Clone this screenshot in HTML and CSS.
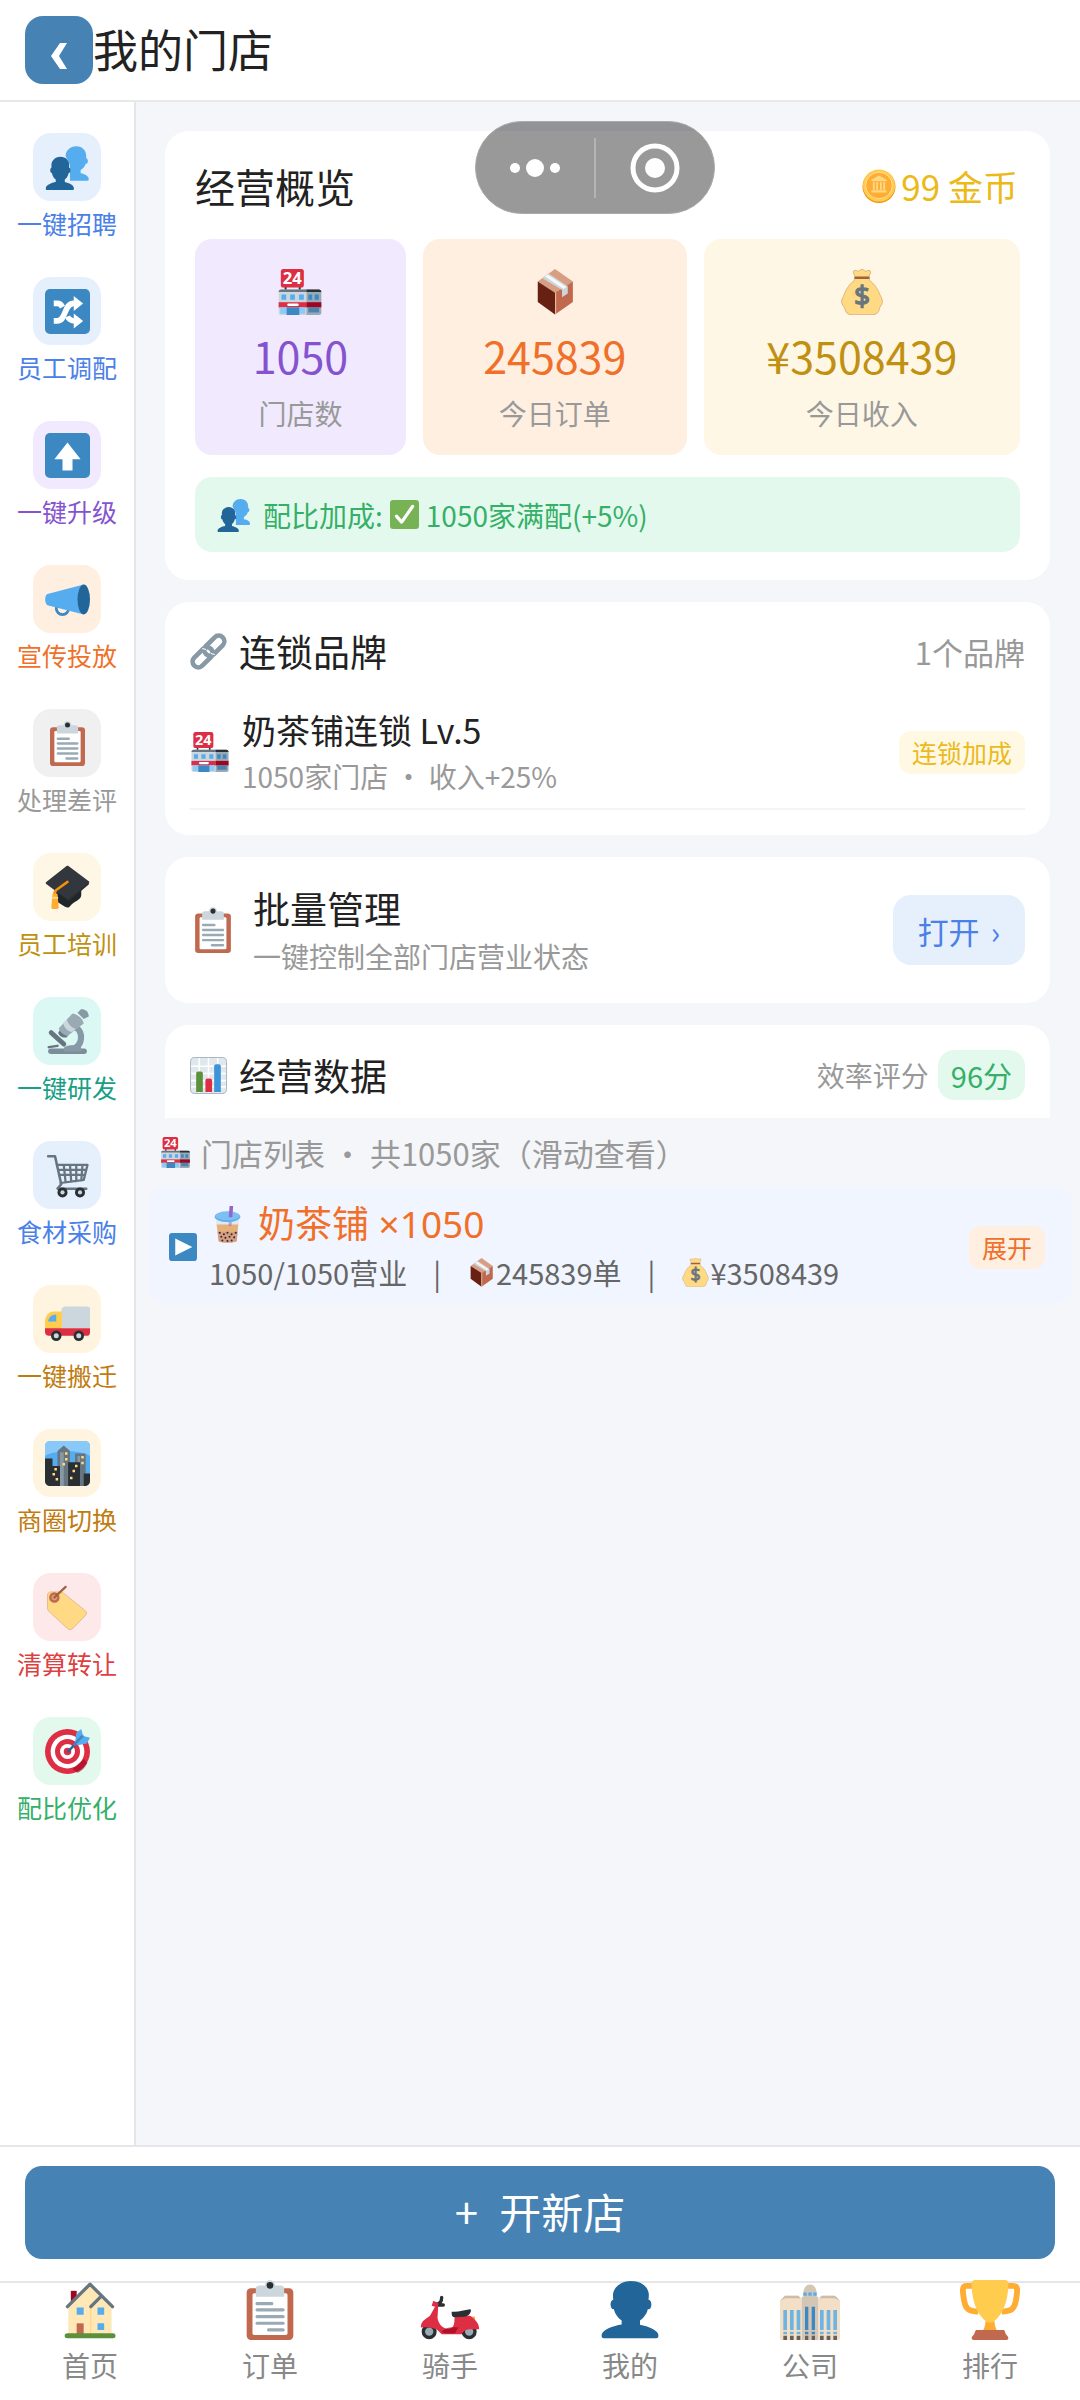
FILE: index.html
```html
<!DOCTYPE html>
<html lang="zh-CN">
<head>
    <meta charset="UTF-8">
    <meta name="viewport" content="width=device-width, initial-scale=1.0">
    <title>我的门店</title>
    <link rel="stylesheet" href="styles.css">
</head>
<body>
    <!-- icon sprite -->
    <svg class="sprite" aria-hidden="true">
        <symbol id="i-user" viewBox="0 0 36 36">
            <path fill="#269" d="M24 26.799v-2.566c2-1.348 4.08-3.779 4.703-6.896.186.103.206.17.413.17.991 0 1.709-1.287 1.709-2.873 0-1.562-.823-2.827-1.794-2.865.187-.674.293-1.577.293-2.735C29.324 5.168 26 .527 18.541.527c-6.629 0-10.777 4.641-10.777 8.507 0 1.123.069 2.043.188 2.755-.911.137-1.629 1.352-1.629 2.845 0 1.587.804 2.873 1.796 2.873.206 0 .025-.067.209-.17C8.952 20.453 11 22.885 13 24.232v2.414c-5 .645-12 3.437-12 6.23v1.061C1 35 2.076 35 3.137 35h29.725C33.924 35 35 35 35 33.938v-1.061c0-2.615-6-5.225-11-6.078z"/>
        </symbol>
        <symbol id="i-users" viewBox="0 0 36 36">
            <path fill="#55ACEE" d="M25 1c-5 0-8.500 3.500-8.500 8L20 16v12.500h14c.7 0 1-.4 1-1.500 0-2-3-4-6.500-4.500V20c2-1 3.600-3 4-5 1.200 0 1.800-1 1.800-2.300 0-1.200-.5-2-1.300-2.200C33.500 4.500 30 1 25 1z"/>
            <g transform="translate(0 9) scale(.66 .77)">
                <path fill="#269" d="M24 26.799v-2.566c2-1.348 4.080-3.779 4.703-6.896.186.103.206.17.413.17.991 0 1.709-1.287 1.709-2.873 0-1.562-.823-2.827-1.794-2.865.187-.674.293-1.577.293-2.735C29.324 5.168 26 .527 18.541.527c-6.629 0-10.777 4.641-10.777 8.507 0 1.123.069 2.043.188 2.755-.911.137-1.629 1.352-1.629 2.845 0 1.587.804 2.873 1.796 2.873.206 0 .025-.067.209-.17C8.952 20.453 11 22.885 13 24.232v2.414c-5 .645-12 3.437-12 6.230v1.061C1 35 2.076 35 3.137 35h29.725C33.924 35 35 35 35 33.938v-1.061c0-2.615-6-5.225-11-6.078z"/>
            </g>
        </symbol>
        <symbol id="i-shuffle" viewBox="0 0 36 36">
            <rect width="36" height="36" rx="4" fill="#3B88C3"/>
            <path fill="none" stroke="#fff" stroke-width="4.500" d="M7 25.500h3c7 0 5-14 13-14h1"/>
            <path fill="none" stroke="#fff" stroke-width="4.500" d="M7 11.500h3c2 0 3 1 4 3M18 22c1 2.300 3 3.500 6 3.500"/>
            <path fill="#fff" d="M23 5.500l7.500 6-7.500 6zM23 19.500l7.500 6-7.500 6z"/>
        </symbol>
        <symbol id="i-up" viewBox="0 0 36 36">
            <rect width="36" height="36" rx="4" fill="#3B88C3"/>
            <path fill="#fff" d="M18 7.500L28.500 21H22v9h-8v-9H7.500z"/>
        </symbol>
        <symbol id="i-play" viewBox="0 0 36 36">
            <rect width="36" height="36" rx="4" fill="#3B88C3"/>
            <path fill="#fff" d="M8 7l22 11L8 29z"/>
        </symbol>
        <symbol id="i-check" viewBox="0 0 36 36">
            <rect width="36" height="36" rx="4" fill="#77B255"/>
            <path fill="none" stroke="#fff" stroke-width="4" stroke-linecap="round" stroke-linejoin="round" d="M8 20l6.500 7.500L28 8"/>
        </symbol>
        <symbol id="i-horn" viewBox="0 0 36 36">
            <circle cx="14" cy="25" r="5" fill="none" stroke="#3B88C3" stroke-width="2.200"/>
            <path fill="#55ACEE" d="M2 13.500L31 6v24L2 22.500c-2.500-1-2.500-8 0-9z"/>
            <ellipse cx="31" cy="18" rx="5" ry="12" fill="#269"/>
        </symbol>
        <symbol id="i-clip" viewBox="0 0 36 36">
            <rect x="4" y="5" width="28" height="31" rx="2.500" fill="#C1694F"/>
            <rect x="7.500" y="8" width="21" height="25" rx="1" fill="#fff"/>
            <circle cx="18" cy="3.200" r="3" fill="#CCD6DD"/>
            <path fill="#CCD6DD" d="M9.500 10V5c0-1 1-1.700 2-1.700h13c1 0 2 .7 2 1.700v5z"/>
            <circle cx="18" cy="3.200" r="2" fill="#292F33"/>
            <g fill="#99AAB5">
                <rect x="9.300" y="13.200" width="10.700" height="1.900" rx=".9"/>
                <rect x="9.300" y="17" width="17.500" height="1.900" rx=".9"/>
                <rect x="9.300" y="21" width="17.500" height="1.900" rx=".9"/>
                <rect x="9.300" y="25" width="17.500" height="1.900" rx=".9"/>
                <rect x="16.200" y="29" width="10.600" height="1.900" rx=".9"/>
            </g>
        </symbol>
        <symbol id="i-cap" viewBox="0 0 36 36">
            <path fill="#212629" d="M9 17l20 1v6c0 4-6 5-9 9-.8 1.300-2.500 1.300-4 .4L9 29z"/>
            <path fill="#31373D" d="M17 1c.7-.5 1.300-.5 2 0l16 12c.6.6.6 1.100 0 1.600L20 27.500c-.7.600-1.500.600-2.300 0L1 15.200c-.6-.6-.6-1.100 0-1.600z"/>
            <path fill="#292F33" d="M18 28l17-14v1.500L19 29z"/>
            <path fill="none" stroke="#F4900C" stroke-width="2" stroke-linecap="round" d="M18 13.500L9 20c-1.500 1-1.500 2-1.500 4"/>
            <path fill="#FFAC33" d="M6 23h4l1 11.500c-2 1-4.500 1-6 0z"/>
            <path fill="#FFD983" d="M5.500 25.500h5v1.500h-5z"/>
        </symbol>
        <symbol id="i-scope" viewBox="0 0 36 36">
            <path fill="none" stroke="#8899A6" stroke-width="5" d="M25 15c6 4 5 15-3 17"/>
            <rect x="2.500" y="31.500" width="31" height="4.500" rx="2.200" fill="#7d8c99"/>
            <path fill="#8899A6" d="M15 32c0-2 3-3 7-3s7 1 7 3v2H15z"/>
            <path stroke="#66757F" stroke-width="4" stroke-linecap="round" d="M5 19l10 9"/>
            <path stroke="#66757F" stroke-width="2" stroke-linecap="round" d="M3 30.500l7-1"/>
            <path fill="#8899A6" d="M26 3l3-3c4 0 6 3 6 6l-4 2z"/>
            <path fill="#66757F" d="M13 15l-2.500 4c1 3 4 4.500 7 3.500l2-3z"/>
            <path fill="#99AAB5" d="M22 3.500c4 .5 8 4 9 8L18 21.500c-3-.5-6-3-7-6z"/>
            <path fill="#CCD6DD" d="M14.500 11l3-2.500c1 3.500 3.500 6 7 7.500l-3 2.500c-4-1-6.500-4-7-7.500z"/>
        </symbol>
        <symbol id="i-cart" viewBox="0 0 36 36">
            <g fill="none" stroke="#66757F" stroke-width="2" stroke-linecap="round" stroke-linejoin="round">
                <path d="M2.500 2.500H8L13 25l-3 3.500h23"/>
                <path stroke-width="1.800" d="M9.500 9.500h24.500L31 21.500 12.500 24M10.500 13.500H33M11.500 17.500h20.500M15 9.500l1.500 14M20 9.500l1 13.500M25 9.500v13M30 9.500L29 22"/>
            </g>
            <circle cx="14" cy="31.500" r="4" fill="#292F33"/><circle cx="14" cy="31.500" r="1.700" fill="#CCD6DD"/>
            <circle cx="28" cy="31.500" r="4" fill="#292F33"/><circle cx="28" cy="31.500" r="1.700" fill="#CCD6DD"/>
        </symbol>
        <symbol id="i-truck" viewBox="0 0 36 36">
            <path fill="#CCD6DD" d="M13 11c0-2 1.500-3.500 3.500-3.500H34c1.200 0 2 .8 2 2V25H13z"/>
            <path fill="#FFCC4D" d="M13.500 11.500v14H0V20c0-5 3-8.500 7-8.500z"/>
            <path fill="#55ACEE" d="M9 14v5.500H2.500C3 16.500 5 14 9 14z"/>
            <path fill="#DD2E44" d="M0 25h36v3.500c0 1.500-1 2.500-2.500 2.500H3c-1.700 0-3-1-3-3z"/>
            <circle cx="9" cy="31" r="4.200" fill="#292F33"/><circle cx="9" cy="31" r="2" fill="#CCD6DD"/>
            <circle cx="27" cy="31" r="4.200" fill="#292F33"/><circle cx="27" cy="31" r="2" fill="#CCD6DD"/>
        </symbol>
        <symbol id="i-city" viewBox="0 0 36 36">
            <rect width="36" height="36" rx="4" fill="#55ACEE"/>
            <path fill="#88C9F9" d="M0 12V4c0-2 2-4 4-4h28c2 0 4 2 4 4v8c-8-5-28-5-36 0z"/>
            <path fill="#66757F" d="M10 36V8l5-4.500L20 8v28zM24 10h8.500v26H24z"/>
            <path fill="#8899A6" d="M12 36V9h3v27zM26 12h2v24h-2z"/>
            <path fill="#292F33" d="M0 14h6v6h6v16H4c-2.200 0-4-1.800-4-4zM18.500 17H28v19h-9.500zM31 26h5v6c0 2.200-1.800 4-4 4h-1z"/>
            <path fill="#FFD983" d="M16 9h2v2h-2zM16 13.500h2v2h-2zM14 17.500h2v2h-2zM29 12h2v2h-2zM29 16.500h2v2h-2zM7.500 21.500h2v2h-2zM6 25.500h2v2H6zM8.500 29.500h2v2h-2zM24 19h2v2h-2zM22 23h2v2h-2zM20 28.500h2v2h-2z"/>
        </symbol>
        <symbol id="i-tag" viewBox="0 0 36 36">
            <path fill="#FFD983" stroke="#D3A976" stroke-width=".5" d="M2 8c0-1.500 1-2.500 2.500-2.500H12c1 0 2 .3 2.800 1l17.400 14c1.300 1 1.300 2.500.3 3.700L22 35c-1.200 1-2.700 1-3.800 0L3 21c-.7-.7-1-1.500-1-2.500z"/>
            <circle cx="7.500" cy="10" r="3.200" fill="#D99E82" stroke="#C1694F" stroke-width="2"/>
            <path stroke="#A0613E" stroke-width="1.800" stroke-linecap="round" d="M7.500 10L16.500 1.500"/>
        </symbol>
        <symbol id="i-target" viewBox="0 0 36 36">
            <circle cx="18" cy="18" r="18" fill="#DD2E44"/>
            <circle cx="18" cy="18" r="13.500" fill="#fff"/>
            <circle cx="18" cy="18" r="10" fill="#DD2E44"/>
            <circle cx="18" cy="18" r="6" fill="#fff"/>
            <circle cx="18" cy="18" r="3" fill="#DD2E44"/>
            <path fill="#A0041E" opacity=".6" d="M22 32l9-8 3 3c-2 4-5 7-8 8z"/>
            <path stroke="#269" stroke-width="2" stroke-linecap="round" d="M18.500 18L28 8"/>
            <path fill="#55ACEE" d="M24 11l1-8 4-3 1.500 5.500L36 7l-2.500 4.500L26 13z"/>
            <path stroke="#3B88C3" stroke-width="2" d="M23 13l7-7.500"/>
        </symbol>
        <symbol id="i-store" viewBox="0 0 36 36">
            <path fill="#292F33" d="M6 13h1.500v4H6zM17 13h1.500v4H17z"/>
            <path fill="#CCD6DD" d="M1.300 18c0-1 .7-2 2-2H23v20H3c-1 0-1.700-.7-1.700-1.700z"/>
            <path fill="#99AAB5" d="M23 16h9.700c1.300 0 2 1 2 2v16.300c0 1-.7 1.700-1.700 1.700H23z"/>
            <path fill="#66757F" d="M1.300 18c0-1 .7-2 2-2H23v2z"/>
            <path fill="#292F33" d="M23 16h9.700c1.300 0 2 1 2 2H23z"/>
            <path fill="#55ACEE" d="M3.500 20h3.700v4H3.500zM10.300 20H14v4h-3.700zM17.300 20H21v4h-3.700z"/>
            <path fill="#3B88C3" d="M24.500 20h3v4h-3zM29.500 20h3.200v4h-3.200z"/>
            <path fill="#DD2E44" d="M1.300 26H23v4H1.300z"/>
            <path fill="#A0041E" d="M23 26h11.700v4H23z"/>
            <rect x="8" y="27" width="9" height="2" rx="1" fill="#fff"/>
            <path fill="#8CCAF7" d="M2.500 30h5v5h-5zM17.500 30H22v5h-4.500z"/>
            <path fill="#3B88C3" d="M7.500 30h10v6h-10z"/>
            <path fill="#4a84ae" d="M24.500 30h8.500v4h-8.500z"/>
            <rect x="3" width="18" height="14.500" rx="2" fill="#DD2E44"/>
            <text x="12" y="12" class="sign-text">24</text>
        </symbol>
        <symbol id="i-box" viewBox="0 0 36 36">
            <path fill="#D99E82" d="M18 0l14 9.800-14 9L4.500 9.800z"/>
            <path fill="#662113" d="M4.500 9.800L18 18.600v17L4.500 25.800z"/>
            <path fill="#C1694F" d="M32 9.800l-14 8.800v17l14-9.800z"/>
            <path fill="#E8B79F" d="M18 18.600l.9-.5v16.900l-.9.600z"/>
            <path fill="#CCD6DD" d="M8.200 7.300l5-3.500L28 13.500v5.700l-4.500 2.900V16.500z"/>
            <path fill="#F5F8FA" d="M10.300 5.800l2-1.400L27 14l-2.300 1.600z"/>
        </symbol>
        <symbol id="i-bag" viewBox="0 0 36 36">
            <path fill="#FFD983" stroke="#B58D55" stroke-width=".4" d="M11.500 1.500c1.300-1.200 2.700.2 3.500.2S16.500.3 18 .3s2.200 1.400 3 1.400 2.200-1.400 3.500-.2c1 1-.5 2.500-1 4.500l.5 3c3 2 6.500 6.500 8 11 .5 1.500 2 3 2 5.500 0 3-2.500 4-2.500 6 0 2.500-3 4.300-5 4.300h-17c-2.500 0-4.500-2-4.800-4.300C4.500 29.500 2 28.500 2 25.500c0-2.500 1.500-3.500 2-5.500 1.500-4.500 5-9 8-11l.5-3c-.5-2-2-3.500-1-4.500z"/>
            <rect x="12" y="5.800" width="12" height="2" rx="1" fill="#A0613E"/>
            <text x="18" y="29" class="bag-text">$</text>
        </symbol>
        <symbol id="i-coin" viewBox="0 0 36 36">
            <circle cx="18" cy="18.500" r="17.500" fill="#F4900C"/>
            <circle cx="18" cy="17.500" r="17" fill="#FFCC4D"/>
            <circle cx="18" cy="17.500" r="14" fill="#FFAC33" stroke="#FFE8B6" stroke-width=".8"/>
            <path fill="#FFD983" d="M10 11.500l8-4.500 8 4.500v1.500H10zM11.500 14h2v8h-2zM15 14h2v8h-2zM19 14h2v8h-2zM22.500 14h2v8h-2zM10 22.500h16v2.500H10z"/>
        </symbol>
        <symbol id="i-link" viewBox="0 0 36 36">
            <g fill="none" stroke="#8899A6" stroke-width="4.500">
                <rect x="-11.500" y="-5.500" width="23" height="11" rx="5.500" transform="translate(12.300 23.700) rotate(-45)"/>
                <rect x="-11.500" y="-5.500" width="23" height="11" rx="5.500" transform="translate(23.700 12.300) rotate(-45)"/>
            </g>
            <path fill="none" stroke="#fff" stroke-width="1" d="M12 15l3.500 1M20.500 20l3.500 1"/>
        </symbol>
        <symbol id="i-chart" viewBox="0 0 36 36">
            <rect x=".5" y=".5" width="35" height="35" rx="4" fill="#E1E8ED" stroke="#99AAB5" stroke-width=".8"/>
            <path fill="none" stroke="#fff" stroke-width="1.500" d="M1 9h34M1 16h34M1 23h34M1 29h34M9 1v34M18 1v34M27 1v34"/>
            <path fill="#5C913B" d="M6 16c0-1.200.8-2 2-2h2.500c1.200 0 2 .8 2 2v18H6z"/>
            <path fill="#DD2E44" d="M15 23c0-1.200.8-2 2-2h2.500c1.200 0 2 .8 2 2v11H15z"/>
            <path fill="#3B94D9" d="M23.500 9c0-1.200.8-2 2-2H28c1.200 0 2 .8 2 2v25h-6.500z"/>
        </symbol>
        <symbol id="i-tea" viewBox="0 0 36 36">
            <path fill="#E1E8ED" d="M6.500 11h23l-2.500 23c0 1-4 2-9 2s-9-1-9-2z"/>
            <path fill="#E5B07A" d="M7.500 18h21L26.800 34c0 .8-4 1.500-8.800 1.500s-8.500-.7-8.500-1.500z"/>
            <path fill="#D99E82" d="M8.300 25h19.500l-.8 9c0 .8-4 1.500-9 1.500s-8.500-.7-8.500-1.500z"/>
            <g fill="#292F33">
                <circle cx="10.500" cy="26" r="1"/><circle cx="14.500" cy="27.500" r="1"/><circle cx="18" cy="26" r="1"/><circle cx="22" cy="27.500" r="1"/><circle cx="26" cy="26" r="1"/>
                <circle cx="12" cy="30" r="1"/><circle cx="16" cy="31" r="1"/><circle cx="20" cy="30" r="1"/><circle cx="24.500" cy="30.500" r="1"/>
                <circle cx="13" cy="33.500" r="1"/><circle cx="18" cy="34" r="1"/><circle cx="22" cy="33.500" r="1"/>
            </g>
            <ellipse cx="18" cy="10.500" rx="12.500" ry="5" fill="#5DADEC"/>
            <ellipse cx="18" cy="9.500" rx="12" ry="4.300" fill="#7cc0f3"/>
            <path fill="#9266CC" d="M20 0h3.500l-.8 11h-3.500z"/>
            <path fill="#9266CC" opacity=".5" d="M19.200 15.500h3l-.3 4h-3z"/>
        </symbol>
        <symbol id="i-house" viewBox="0 0 36 36">
            <path fill="#A0041E" d="M6.500 6.500h3.500V16H6.500z"/>
            <path fill="#FFE8B6" d="M5 16L18 3l13 13v17H5z"/>
            <path fill="#FFD983" d="M18 14.500h.8V33H18z"/>
            <path fill="none" stroke="#66757F" stroke-width="2" stroke-linecap="round" stroke-linejoin="round" d="M4.500 16L18 2.500 31.500 16M18.500 16l6-6"/>
            <path fill="#55ACEE" d="M10 16.500h4.200v4.300H10zM22.500 16.500h4v4.300h-4zM22.500 26h4v4h-4z"/>
            <path fill="#C1694F" d="M10 26h4.200v7H10z"/>
            <rect x="2.800" y="32" width="30.500" height="3" rx="1.500" fill="#5C913B"/>
        </symbol>
        <symbol id="i-scooter" viewBox="0 0 36 36">
            <circle cx="5.500" cy="31" r="4.500" fill="#292F33"/><circle cx="5.500" cy="31" r="2.500" fill="#99AAB5"/>
            <circle cx="29.500" cy="31" r="4.500" fill="#292F33"/><circle cx="29.500" cy="31" r="2.500" fill="#99AAB5"/>
            <path fill="#FFAC33" d="M30 22h3v3h-3z"/>
            <path fill="none" stroke="#292F33" stroke-width="2" stroke-linecap="round" d="M9.500 14.500c2.500 0 3.500-1.500 3.500-4M10.500 15h3.500"/>
            <path fill="#DD2E44" d="M8 12.500l3 1.500-.5 9c.7 3 2 5 4.500 6 3 1 5 0 5.500-3 .3-1.500 0-3 .5-4.500h9c3 2 5.500 4.500 5.500 8H30c-2 0-4 1-5 3h-12l-3-3c-3-1-6-1.500-9.500-1 0-4 3-5 5.500-7L9 16l-2-.5z"/>
            <path fill="#A0041E" opacity=".7" d="M13 31c2-2.500 6-3 10-2.500L21 32h-6z"/>
            <path fill="#292F33" d="M19 19c4 .5 7-1 11-1.500.8 0 .8 1 0 2.500-.7 1.500-2 2-4 2l-5.500.3C19 22 19 20.500 19 19z"/>
        </symbol>
        <symbol id="i-office" viewBox="0 0 36 36">
            <path fill="#F2DFC6" d="M0 12.500L3 9.500h8l2 2V36H1c-.6 0-1-.4-1-1zM36 12.500l-3-3h-8l-2 2V36h12c.6 0 1-.4 1-1z"/>
            <path fill="#CCBDAA" d="M0 12.500L3 9.500h8l1.500 1.500H3zM36 12.500l-3-3h-8L23.500 11H33z"/>
            <path fill="#D3C6B5" d="M14 8c0-7 8-7 8 0v2h1v26H13V10h1z"/>
            <path fill="#55ACEE" d="M14 7.500h2v2h-2zM17 7.500h2v2h-2zM20 7.500h2v2h-2z"/>
            <path fill="#6EB4E2" d="M2 18h2.200v12H2zM6 18h2.200v12H6zM10 18h2.200v12H10zM24 18h2.200v12H24zM28 18h2.200v12H28zM32 18h2.200v12H32zM2 31h2.200v1.500H2zM6 31h2.200v1.500H6zM10 31h2.200v1.500H10zM24 31h2.200v1.500H24zM28 31h2.200v1.500H28zM32 31h2.200v1.500H32z"/>
            <path fill="#3B88C3" d="M15 16h2v14h-2zM19 16h2v14h-2zM15 31h2v1.500h-2zM19 31h2v1.500h-2z"/>
            <path fill="#66605a" d="M2 33.500h2.200V36H2zM6 33.500h2.200V36H6zM10 33.500h2.200V36H10zM15 33.500h2V36h-2zM19 33.500h2V36h-2zM24 33.500h2.200V36H24zM28 33.500h2.200V36H28zM32 33.500h2.200V36H32z"/>
        </symbol>
        <symbol id="i-trophy" viewBox="0 0 36 36">
            <path fill="none" stroke="#FFAC33" stroke-width="3.500" stroke-linejoin="round" d="M9 3.500H4c-3 0-2.500 3-1.500 9 1 5 2.500 6 8.500 6.500M27 3.500h5c3 0 2.500 3 1.500 9-1 5-2.500 6-8.500 6.500"/>
            <path fill="#FFAC33" d="M15.500 22h5c0 3 .3 6 2 9h-9c1.700-3 2-6 2-9z"/>
            <path fill="#FFCC4D" d="M7 2c0-1.200.8-2 2-2h18c1.200 0 2 .8 2 2 0 10-3 19-9 23-1 .7-3 .7-4 0C10 21 7 12 7 2z"/>
            <path fill="#C1694F" d="M10 30h16c1 0 1 1.500 1.500 2.500.8 1 1.500 1.500 1.500 2.500 0 .7-.5 1-1.200 1H8.200c-.7 0-1.200-.3-1.200-1 0-1 .7-1.500 1.500-2.500C9 31.500 9 30 10 30z"/>
        </symbol>
    </svg>

    <header class="topbar">
        <button class="back-btn" aria-label="返回">
            <svg viewBox="0 0 16 26"><path d="M9 0h7L8 13l8 13H9L0 13z" fill="#fff"/></svg>
        </button>
        <h1>我的门店</h1>
    </header>

    <div class="capsule">
        <button class="capsule-btn" aria-label="更多">
            <svg viewBox="0 0 50 50"><circle cx="5" cy="25" r="5"/><circle cx="25" cy="25" r="9"/><circle cx="45" cy="25" r="5"/></svg>
        </button>
        <button class="capsule-btn" aria-label="关闭">
            <svg viewBox="0 0 50 50"><circle cx="25" cy="25" r="22" class="ring"/><circle cx="25" cy="25" r="10"/></svg>
        </button>
    </div>

    <div class="layout">
        <aside class="sidebar">
            <button class="side-item blue"><span class="side-icon"><svg><use href="#i-users"/></svg></span>一键招聘</button>
            <button class="side-item blue"><span class="side-icon"><svg><use href="#i-shuffle"/></svg></span>员工调配</button>
            <button class="side-item purple"><span class="side-icon"><svg><use href="#i-up"/></svg></span>一键升级</button>
            <button class="side-item orange"><span class="side-icon"><svg><use href="#i-horn"/></svg></span>宣传投放</button>
            <button class="side-item gray"><span class="side-icon"><svg><use href="#i-clip"/></svg></span>处理差评</button>
            <button class="side-item gold"><span class="side-icon"><svg><use href="#i-cap"/></svg></span>员工培训</button>
            <button class="side-item teal"><span class="side-icon"><svg><use href="#i-scope"/></svg></span>一键研发</button>
            <button class="side-item blue"><span class="side-icon"><svg><use href="#i-cart"/></svg></span>食材采购</button>
            <button class="side-item brown"><span class="side-icon"><svg><use href="#i-truck"/></svg></span>一键搬迁</button>
            <button class="side-item brown"><span class="side-icon"><svg><use href="#i-city"/></svg></span>商圈切换</button>
            <button class="side-item red"><span class="side-icon"><svg><use href="#i-tag"/></svg></span>清算转让</button>
            <button class="side-item green"><span class="side-icon"><svg><use href="#i-target"/></svg></span>配比优化</button>
        </aside>

        <main class="content">
            <div class="cards">
                <section class="card overview">
                    <div class="overview-head">
                        <h2>经营概览</h2>
                        <span class="coins"><svg><use href="#i-coin"/></svg>99 金币</span>
                    </div>
                    <div class="stats">
                        <div class="stat purple">
                            <svg><use href="#i-store"/></svg>
                            <span class="stat-num">1050</span>
                            <span class="stat-label">门店数</span>
                        </div>
                        <div class="stat orange">
                            <svg><use href="#i-box"/></svg>
                            <span class="stat-num">245839</span>
                            <span class="stat-label">今日订单</span>
                        </div>
                        <div class="stat gold">
                            <svg><use href="#i-bag"/></svg>
                            <span class="stat-num">¥3508439</span>
                            <span class="stat-label">今日收入</span>
                        </div>
                    </div>
                    <div class="bonus">
                        <svg class="bonus-icon"><use href="#i-users"/></svg>
                        <span>配比加成:</span>
                        <svg class="bonus-check"><use href="#i-check"/></svg>
                        <span>1050家满配(+5%)</span>
                    </div>
                </section>

                <section class="card brand">
                    <div class="card-head">
                        <svg class="head-icon"><use href="#i-link"/></svg>
                        <h3>连锁品牌</h3>
                        <span class="brand-count">1个品牌</span>
                    </div>
                    <div class="brand-row">
                        <svg class="brand-icon"><use href="#i-store"/></svg>
                        <div class="row-text">
                            <div class="brand-name">奶茶铺连锁 Lv.5</div>
                            <div class="sub">1050家门店 · 收入+25%</div>
                        </div>
                        <span class="tag yellow">连锁加成</span>
                    </div>
                </section>

                <section class="card batch">
                    <svg class="batch-icon"><use href="#i-clip"/></svg>
                    <div class="row-text">
                        <h3>批量管理</h3>
                        <div class="sub">一键控制全部门店营业状态</div>
                    </div>
                    <button class="open-btn">打开<span>›</span></button>
                </section>

                <section class="card data">
                    <div class="card-head">
                        <svg class="head-icon"><use href="#i-chart"/></svg>
                        <h3>经营数据</h3>
                        <span class="score-label">效率评分</span>
                        <span class="score">96分</span>
                    </div>
                </section>
            </div>

            <h4 class="list-title"><svg><use href="#i-store"/></svg>门店列表 · 共1050家（滑动查看）</h4>
            <div class="shop-row">
                <svg class="play"><use href="#i-play"/></svg>
                <div class="row-text">
                    <div class="shop-name"><svg><use href="#i-tea"/></svg>奶茶铺 ×1050</div>
                    <div class="shop-meta">
                        <span>1050/1050营业</span>
                        <span>|</span>
                        <span class="meta-item"><svg><use href="#i-box"/></svg>245839单</span>
                        <span>|</span>
                        <span class="meta-item"><svg><use href="#i-bag"/></svg>¥3508439</span>
                    </div>
                </div>
                <button class="tag orange">展开</button>
            </div>
        </main>
    </div>

    <div class="action-bar">
        <button class="new-shop"><span>+</span>开新店</button>
    </div>

    <nav class="tabbar">
        <a href="#home"><svg><use href="#i-house"/></svg>首页</a>
        <a href="#orders"><svg><use href="#i-clip"/></svg>订单</a>
        <a href="#riders"><svg><use href="#i-scooter"/></svg>骑手</a>
        <a href="#me"><svg><use href="#i-user"/></svg>我的</a>
        <a href="#company"><svg><use href="#i-office"/></svg>公司</a>
        <a href="#rank"><svg><use href="#i-trophy"/></svg>排行</a>
    </nav>
</body>
</html>
```
FILE: styles.css
```css
* {
    box-sizing: border-box;
}
body {
    margin: 0;
    min-height: 100vh;
    display: flex;
    flex-direction: column;
    background: #fff;
    color: #222;
    font-family: "Noto Sans CJK SC", sans-serif;
    font-size: 28px;
}
h1, h2, h3, h4 {
    margin: 0;
    font-weight: 400;
}
button {
    border: none;
    padding: 0;
    font-family: inherit;
    cursor: pointer;
}
svg {
    display: block;
    flex-shrink: 0;
}
.sprite {
    display: none;
}
.sign-text {
    font: bold 13px "Open Sans", sans-serif;
    fill: #fff;
    text-anchor: middle;
}
.bag-text {
    font: 22px "Noto Sans", sans-serif;
    fill: #67757f;
    stroke: #67757f;
    text-anchor: middle;
}

/* top bar */
.topbar {
    display: flex;
    align-items: center;
    height: 102px;
    padding: 0 25px;
    border-bottom: 2px solid #e8e8ea;
}
.topbar h1 {
    padding-bottom: 2px;
    font-size: 45px;
    line-height: 60px;
}
.back-btn {
    width: 68px;
    height: 68px;
    padding-top: 12px;
    border-radius: 18px;
    background: #4682b4;
}
.back-btn svg {
    width: 16px;
    height: 26px;
    margin: 0 auto;
}
.capsule {
    position: absolute;
    top: 121px;
    left: 44%;
    width: 240px;
    height: 93px;
    display: flex;
    align-items: center;
    border: 1px solid #aaa;
    border-radius: 47px;
    background: rgba(0, 0, 0, 0.4);
}
.capsule-btn {
    flex: 1;
    height: 60px;
    background: none;
}
.capsule-btn + .capsule-btn {
    border-left: 2px solid #b4b4b4;
}
.capsule-btn svg {
    width: 50px;
    height: 50px;
    margin: 0 auto;
    fill: #fff;
}
.ring {
    fill: none;
    stroke: #fff;
    stroke-width: 5px;
}

.layout {
    flex: 1;
    display: flex;
}

/* color themes */
.blue { --c: #4a80e8; --bg: #e6f0fd; }
.purple { --c: #8553cf; --bg: #f1e9fe; }
.orange { --c: #f0702a; --bg: #feefe1; }
.gray { --c: #999; --bg: #f0f0f0; }
.gold { --c: #c09010; --bg: #fff7e5; }
.teal { --c: #17a085; --bg: #dcf8f4; }
.brown { --c: #c07c10; --bg: #fff4e0; }
.red { --c: #dd4040; --bg: #fde9ea; }
.green { --c: #34b068; --bg: #e4f9ed; }
.yellow { --c: #ecba20; --bg: #fff8e3; }

/* sidebar */
.sidebar {
    width: 136px;
    flex-shrink: 0;
    padding-top: 31px;
    border-right: 2px solid #e4e6e9;
}
.side-item {
    display: flex;
    flex-direction: column;
    align-items: center;
    width: 100%;
    height: 144px;
    background: none;
    color: var(--c);
    font-size: 25px;
    line-height: 44px;
}
.side-icon {
    display: grid;
    place-items: center;
    width: 68px;
    height: 68px;
    border-radius: 18px;
    background: var(--bg);
}
.side-icon svg {
    width: 45px;
    height: 45px;
}

/* cards */
.content {
    flex: 1;
    min-width: 0;
    background: #f4f6fa;
}
.cards {
    display: flex;
    flex-direction: column;
    gap: 22px;
    padding: 29px 30px 0 29px;
}
.card {
    padding: 25px;
    border-radius: 24px;
    background: #fff;
}
.overview {
    padding: 28px 30px;
}
.overview-head {
    display: flex;
    align-items: center;
    justify-content: space-between;
    margin-bottom: 26px;
}
.overview-head h2 {
    font-size: 40px;
    line-height: 54px;
}
.coins {
    display: flex;
    align-items: center;
    gap: 5px;
    padding-right: 2px;
    color: #ecba18;
    font-size: 35px;
    line-height: 54px;
}
.coins svg {
    width: 34px;
    height: 34px;
}
.stats {
    display: grid;
    grid-template-columns: 4fr 5fr 6fr;
    gap: 17px;
}
.stat {
    display: flex;
    flex-direction: column;
    align-items: center;
    padding: 30px 0 25px;
    border-radius: 17px;
    background: var(--bg);
}
.stat svg {
    width: 46px;
    height: 46px;
}
.stat-num {
    margin-top: 15px;
    color: var(--c);
    font-size: 43px;
    line-height: 50px;
}
.stat-label {
    margin-top: 16px;
    color: #999;
    line-height: 34px;
}
.bonus {
    display: flex;
    align-items: center;
    height: 75px;
    margin-top: 22px;
    padding: 0 22px;
    border-radius: 17px;
    background: #e4f9ed;
    color: #34b068;
}
.bonus-icon {
    width: 34px;
    height: 34px;
    margin-right: 12px;
}
.bonus-check {
    width: 29px;
    height: 29px;
    margin: 0 7px;
}
.card-head {
    display: flex;
    align-items: center;
}
h3 {
    font-size: 37px;
    line-height: 46px;
}
.head-icon {
    width: 37px;
    height: 37px;
    margin-right: 12px;
}
.brand {
    padding-top: 26px;
}
.brand-count {
    margin-left: auto;
    color: #999;
    font-size: 31px;
}
.brand-row {
    display: flex;
    align-items: center;
    margin-top: 22px;
    padding: 10px 0;
    border-bottom: 2px solid #f2f4f6;
}
.brand-icon {
    width: 40px;
    height: 40px;
    margin-right: 12px;
}
.row-text {
    flex: 1;
    min-width: 0;
}
.brand-name {
    font-size: 34px;
    line-height: 48px;
}
.sub {
    color: #999;
    line-height: 44px;
}
.tag {
    padding: 0 13px;
    border-radius: 12px;
    background: var(--bg);
    color: var(--c);
    font-size: 25px;
    line-height: 43px;
}
.batch {
    display: flex;
    align-items: center;
}
.batch-icon {
    width: 46px;
    height: 46px;
    margin-right: 17px;
}
.batch h3 {
    line-height: 52px;
}
.open-btn {
    display: flex;
    align-items: center;
    gap: 11px;
    height: 70px;
    padding: 0 25px;
    border-radius: 18px;
    background: #e6f0fd;
    color: #4a80e8;
    font-size: 31px;
}
/* cut off by the list below */
.data {
    padding-bottom: 18px;
    border-radius: 24px 24px 0 0;
}
.score-label {
    margin-left: auto;
    color: #999;
}
.score {
    margin-left: 9px;
    padding: 0 13px;
    border-radius: 16px;
    background: #e4f9ed;
    color: #34b068;
    font-size: 29px;
    line-height: 50px;
}

/* shop list */
.list-title {
    display: flex;
    align-items: center;
    gap: 10px;
    padding: 0 24px;
    color: #999;
    font-size: 31px;
    line-height: 69px;
}
.list-title svg {
    width: 31px;
    height: 31px;
}
.shop-row {
    display: flex;
    align-items: center;
    margin: 0 8px 0 12px;
    padding: 12px 27px 8px 21px;
    border-radius: 16px;
    background: #f0f5ff;
}
.play {
    width: 28px;
    height: 28px;
    margin-right: 12px;
}
.shop-name {
    display: flex;
    align-items: center;
    gap: 12px;
    color: #f0702a;
    font-family: "Noto Sans", "Noto Sans CJK SC", sans-serif;
    font-size: 37px;
    line-height: 50px;
}
.shop-name svg {
    width: 37px;
    height: 37px;
}
.shop-meta {
    display: flex;
    gap: 26px;
    color: #666;
    font-size: 29px;
    line-height: 46px;
}
.meta-item {
    display: flex;
    align-items: center;
}
.meta-item svg {
    width: 29px;
    height: 29px;
}

/* bottom */
.action-bar {
    padding: 19px 25px 22px;
    border-top: 2px solid #e4e6e9;
}
.new-shop {
    display: flex;
    align-items: center;
    justify-content: center;
    gap: 21px;
    width: 100%;
    height: 93px;
    padding-bottom: 5px;
    border-radius: 17px;
    background: #4682b4;
    color: #fff;
    font-size: 42px;
}
.tabbar {
    display: flex;
    border-top: 2px solid #e4e6e9;
}
.tabbar a {
    flex: 1;
    display: flex;
    flex-direction: column;
    align-items: center;
    margin-top: -3px;
    padding-bottom: 10px;
    color: #888;
    line-height: 50px;
    text-decoration: none;
}
.tabbar svg {
    width: 60px;
    height: 60px;
}
```
